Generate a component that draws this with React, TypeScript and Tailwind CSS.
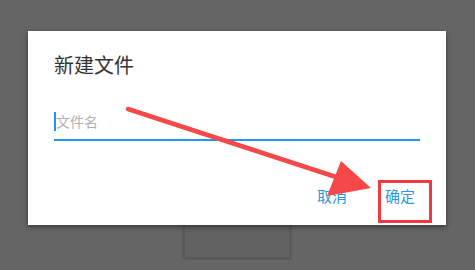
export default function App() {
  return (
    <div className="relative w-[475px] h-[270px] overflow-hidden bg-[#656565] font-['Noto_Sans_CJK_SC','Noto_Sans',sans-serif]">
      {/* page behind the dialog */}
      <div className="absolute left-[182px] top-[150px] w-[110px] h-[110px] rounded-b-[4px] border-[3px] border-[#595959] bg-[#626262]" />

      <div className="relative pl-[28px] pt-[31px]">
        <div className="w-[418px] h-[194px] bg-white shadow-[0_2px_5px_rgba(0,0,0,0.45)] flex flex-col px-[26px]">
          <h2 className="pt-[20px] text-[20px] leading-[28px] text-[#333333]">新建文件</h2>

          <div className="mt-[31px] flex items-center h-[22px]">
            <span className="w-[2px] h-[19px] bg-[#2196f3]" />
            <span className="text-[14px] leading-[20px] text-[#b0b0b0]">文件名</span>
          </div>
          <div className="mt-[7px] h-[2px] bg-[#2196f3]" />

          <div className="mt-auto mb-[19px] flex justify-end items-center gap-[38px] pr-[5px] text-[15px] leading-[20px] text-[#2d98da]">
            <button>取消</button>
            <button>确定</button>
          </div>
        </div>
      </div>

      {/* annotation */}
      <div className="absolute left-[378px] top-[180px] w-[54px] h-[43px] border-[3px] border-[#f2393f]" />
      <svg className="absolute left-0 top-0" width="475" height="270" viewBox="0 0 475 270">
        <line x1="128" y1="109" x2="336" y2="177" stroke="#f54848" strokeWidth="4.5" strokeLinecap="round" />
        <polygon points="341,161 371,188 327,196" fill="#f54848" />
      </svg>
    </div>
  );
}
